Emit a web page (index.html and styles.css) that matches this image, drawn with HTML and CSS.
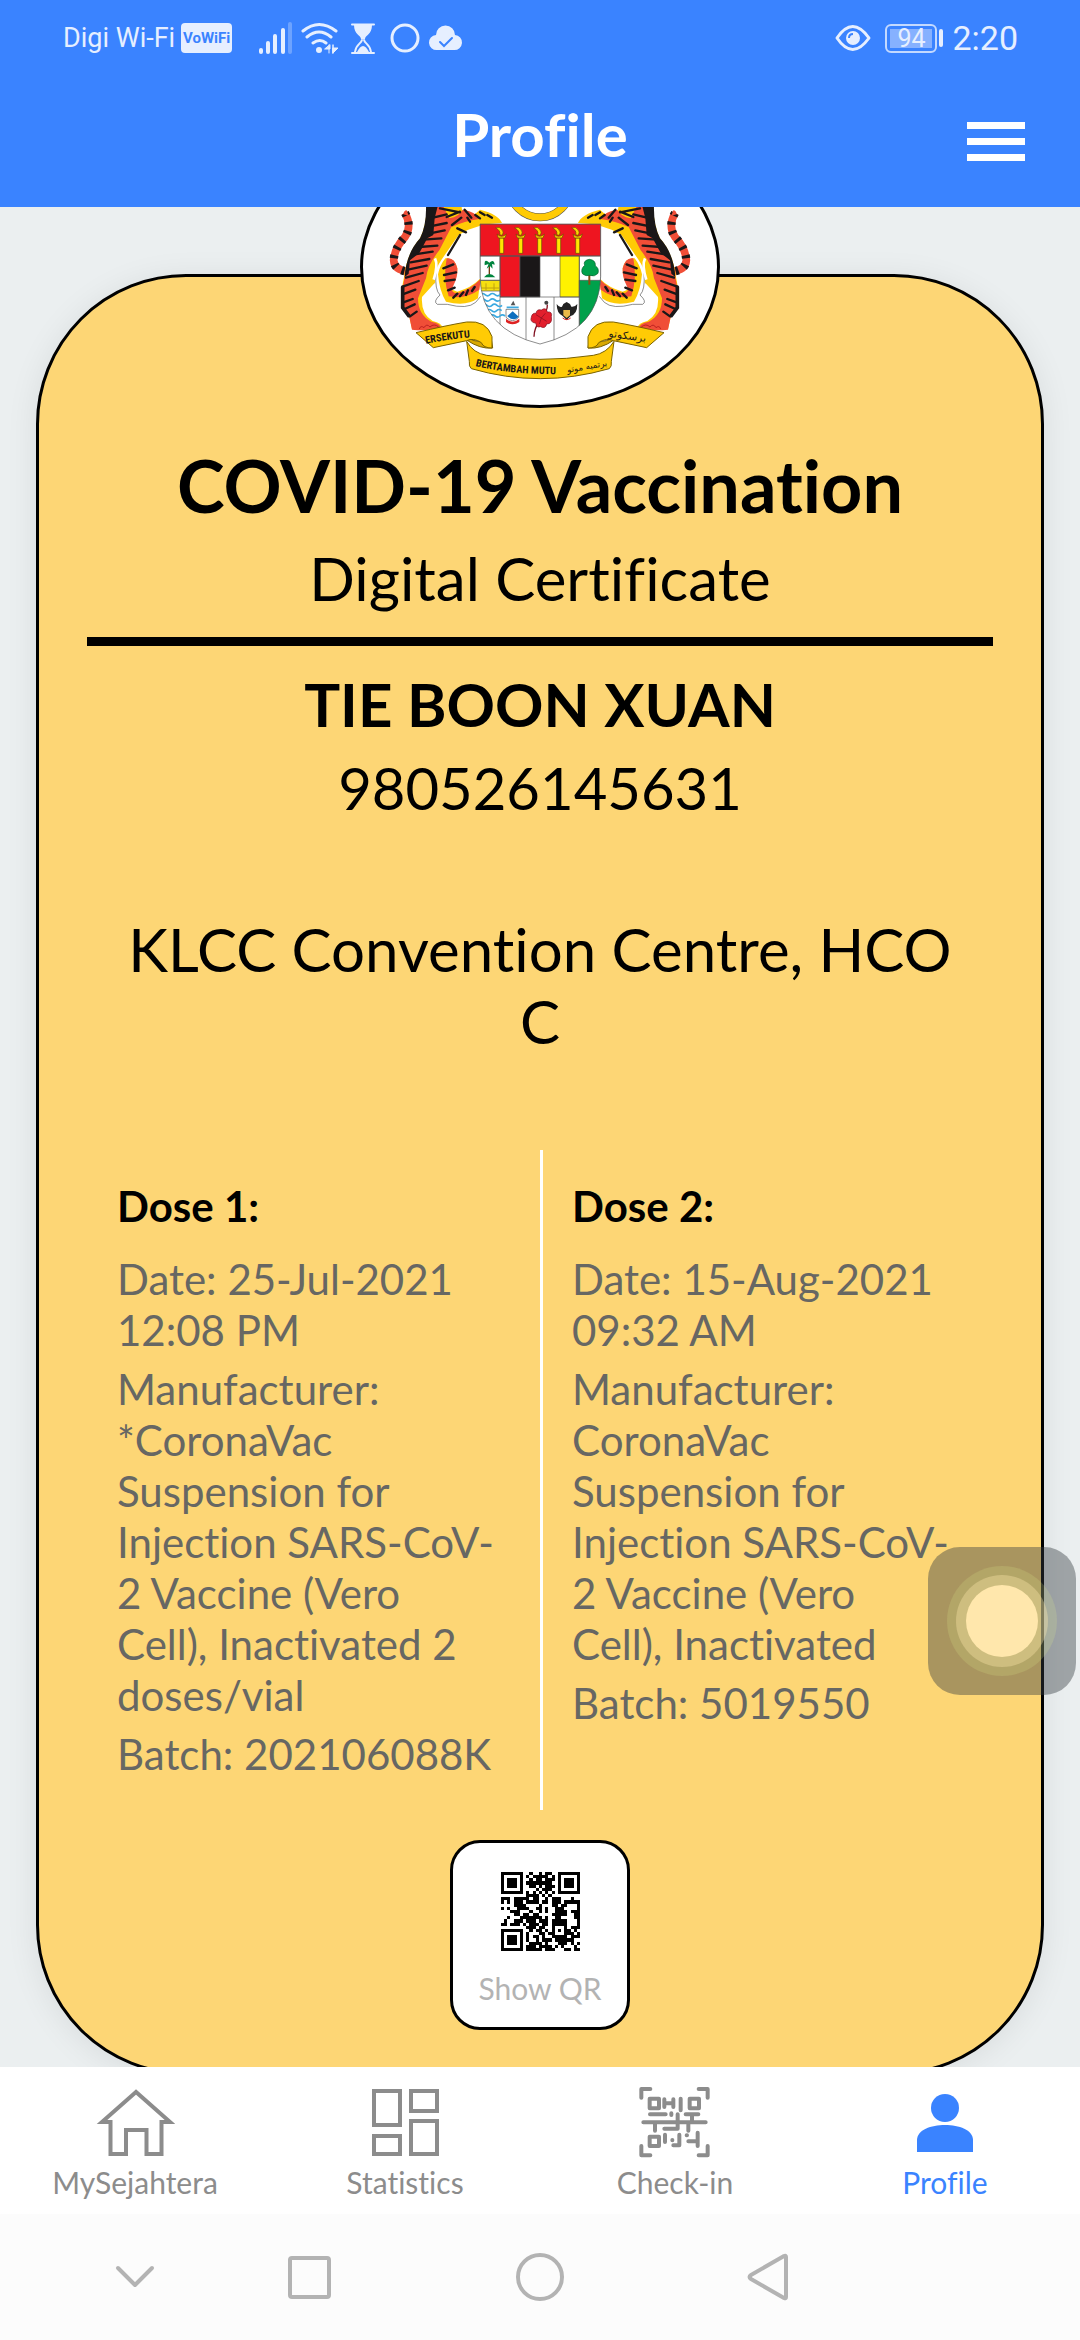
FILE: index.html
```html
<!DOCTYPE html>
<html lang="en">
<head>
<meta charset="utf-8">
<meta name="viewport" content="width=device-width, initial-scale=1">
<title>Profile</title>
<link rel="stylesheet" href="styles.css">
</head>
<body>
<header class="app-header">
  <div class="status-bar">
    <div class="status-left">
      <span class="carrier">Digi Wi-Fi</span>
      <span class="vowifi">VoWiFi</span>
      <svg class="status-icons" width="206" height="36" viewBox="258 20 206 36" fill="none" stroke="#e6efff" stroke-width="3" stroke-linecap="round" aria-hidden="true">
        <g stroke-width="4">
          <path d="M262 50v2M269 43v9M276 36v16M284 30v22"/>
          <path d="M291 24v28" opacity=".3"/>
        </g>
        <path d="M304 31q16-13 33 0M308 37q12-10 24 0M314 43q7-5 13 0" stroke-width="3"/>
        <circle cx="320" cy="50" r="3" fill="#e6efff" stroke="none"/>
        <path d="M326 49h5v-4zM330 45v8M334 53v-8zM334 48h5l-5 5z" fill="#e6efff" stroke-width="1"/>
        <path d="M353 24.500h22M353 53h22" stroke-width="2"/>
        <path d="M355 25h18c0 10-7 10-7 14h-4c0-4-7-4-7-14z" fill="#e6efff" stroke="none"/>
        <path d="M363 40c-1 4-6 4-7 12M365 40c1 4 6 4 7 12" stroke-width="2"/>
        <path d="M358 52q6-12 12 0z" fill="#e6efff" stroke="none"/>
        <circle cx="406" cy="38" r="13"/>
        <path d="M440 50h15a7.500 7.500 0 0 0 1-15a9.500 9.500 0 0 0-19 0a7.500 7.500 0 0 0 1 15z" fill="#e6efff" stroke="none"/>
        <path d="M441 42l4 4 8-8" stroke="#3a83ff" stroke-width="2"/>
      </svg>
    </div>
    <div class="status-right">
      <svg width="36" height="28" viewBox="0 0 36 28" fill="none" stroke="#e6efff" stroke-width="3" aria-hidden="true">
        <path d="M2 14Q17.500-9 34 14Q17.500 37 2 14z" stroke-linejoin="round"/>
        <circle cx="18" cy="14" r="7" fill="#e6efff" stroke="none"/>
        <path d="M14 14q0-4 4-4" stroke="#3a83ff" stroke-width="2"/>
      </svg>
      <span class="battery"><span class="battery-level">94</span></span>
      <span class="battery-tip"></span>
      <time class="clock">2:20</time>
    </div>
  </div>
  <div class="title-bar">
    <h1 class="title">Profile</h1>
    <button class="menu" type="button" aria-label="Menu"><i></i><i></i><i></i></button>
  </div>
</header>

<main class="content">
  <div class="emblem">
    <svg class="emblem-art" viewBox="69 -213 1062 828" aria-label="Coat of arms">
      <defs>
        <g id="tiger">
          <path d="M165 232l-45 36 M168 205q-4 50 12 65q-22 20-8 28h30q60 16 85-6l15-18" fill="none" stroke="#555" stroke-width="2"/>
          <path d="M75 24q22 40 0 72q-32 34-34 70q2 30 44 34" fill="none" stroke="#f04e37" stroke-width="23"/>
          <path d="M75 24q22 40 0 72q-32 34-34 70q2 30 44 34" fill="none" stroke="#1a1718" stroke-width="25" stroke-dasharray="9 19"/>
          <path d="M70 28q2-12 10-12l6 16z" fill="#f04e37"/>
          <path d="M196 160q-16 20-22 48q4 50 24 82q60 16 96-10l8-60q-30 30-70 40l-20-8q22-40 20-62q-8-34-36-30z" fill="#ffcb05"/>
          <path d="M200 160q-12 60 6 114q50 10 92-20l4-32q-34 34-68 42q-26 0-14-22q14-26 12-52q-8-34-32-30z" fill="#f04e37"/>
          <path d="M150 0h-10q0 60-20 100q-40 46-48 116q-10 40-4 84q8 20 20 36l8 36q40 6 92-2q-2-16-30-22q-36-20-32-72l40-44q-8-30 20-70l50-72q50-34 130-36q-10-26-66-40q-20 20-50 28l-6-42z" fill="#ffcb05"/>
          <path d="M142 0q0 70-20 100q-40 46-48 116q-10 40-6 84q8 20 20 36l8 38q40 4 88-2q-2-18-30-22q-40-20-40-70l24-60q4-40 40-84l36-70q40-18 84-24q-10-22-50-28q-10 20-40 26l-20-40z" fill="#f04e37"/>
          <path d="M165 160q10 20-4 64" fill="none" stroke="#fff" stroke-width="8"/>
          <path d="M138 0h36l-10 40-4 50-18 10-24 44-28 22-4 40-12 10q4-70 46-116q20-40 18-100z" fill="#1a1718"/>
          <g stroke="#1a1718" fill="none" stroke-width="7" stroke-linecap="round">
            <path d="M150 40l50-12M150 64l50-10M146 86l48-10M130 104l54-4M118 126l54-4M104 148l54-8M92 172l56-10M84 194l56-12M78 218l50-14M70 244l46-16M68 268l38-14M70 292l28-10M74 312l30-14M90 334l20-14"/>
            <path d="M180 10l60 12M200 36l40-16M216 60l28-22M254 14l20 24M270 50l-8-12M286 30l14 10M240 90l-36 60M190 190l30-12M192 210l36-8M194 228l30-4M204 256l20-8M220 278l12-12M240 274l10-12M258 270l6-14M276 258l8-12M232 70l26 12"/>
            <path d="M68 246v62l18 24" stroke-width="11"/>
            <path d="M300 22l14 8M322 30l14 8"/>
          </g>
          <path d="M118 372q4-12 14-4q8-14 18-2q12-12 26 0" fill="none" stroke="#b22" stroke-width="3"/>
        </g>
        <g id="torch">
          <path d="M-6 34h12v46h-12z" fill="#ffe600" stroke="#6b4b00" stroke-width="2"/>
          <path d="M-14 22q14 14 28 0l-4 12h-20zM-18 4q12-6 18 4q8 8 2 18l-8-2q4-12-12-20z" fill="#ffd400" stroke="#6b4b00" stroke-width="2"/>
        </g>
        <path id="motto-left" d="M258 431Q330 416 430 409"/>
        <path id="motto-mid" d="M406 498Q520 526 690 522"/>
      </defs>
      <circle cx="600" cy="-40" r="92" fill="none" stroke="#555" stroke-width="24"/>
      <circle cx="600" cy="-40" r="92" fill="none" stroke="#ffcb05" stroke-width="21"/>
      <use href="#tiger" transform="translate(120 15)"/>
      <use href="#tiger" transform="translate(1080 15) scale(-1 1)"/>
      <g stroke="#555" stroke-width="2">
        <clipPath id="shield"><path d="M420 72H782V230Q778 390 600 432Q424 390 420 230z"/></clipPath>
        <g clip-path="url(#shield)">
          <path d="M420 72H782V440H420z" fill="#fff"/>
          <path d="M420 72H782V168H420zM480 168H540V291H480z" fill="#ee1520"/>
          <path d="M540 168H600V291H540z" fill="#1a1718"/>
          <path d="M660 168H718V291H660z" fill="#fff200"/>
          <path d="M718 241H782V400H718z" fill="#00a14b"/>
          <path d="M420 241H480V273H420z" fill="#f5df10"/>
          <path d="M420 168H782M480 168V400M718 168V400M480 291H718M558 291V430M642 291V430M420 241H480"/>
          <path d="M420 284q7-7 15 0t15 0t15 0t15 0M420 300q7-7 15 0t15 0t15 0t15 0M426 316q7-7 15 0t15 0t15 0t15 0M440 332q7-7 15 0t15 0t15 0M450 348q7-7 15 0t15 0t15 0" stroke="#3ba9e0" stroke-width="5" fill="none"/>
          <path d="M424 264h54M438 250v20M462 250v20" stroke="#c0a010" stroke-width="3"/>
        </g>
        <path d="M420 72H782V230Q778 390 600 432Q424 390 420 230z" fill="none"/>
      </g>
      <use href="#torch" x="485" y="80"/><use href="#torch" x="542" y="80"/><use href="#torch" x="599" y="80"/><use href="#torch" x="656" y="80"/><use href="#torch" x="713" y="80"/>
      <path d="M448 190v34" stroke="#6b3a10" stroke-width="4"/>
      <path d="M448 188q-16-14-14 8l12-4-6 14 10-8 8 8-2-14 8 2q-2-18-16-6zM432 232q16-20 34 0z" fill="#00853e"/>
      <path d="M748 220v34" stroke="#8a4b10" stroke-width="6"/>
      <path d="M748 178q-20 4-14 18q-14 12-6 26q10 8 20 4q16 6 26-6q4-16-8-22q2-18-18-20z" fill="#00a14b" stroke="#00602c" stroke-width="2"/>
      <path d="M498 328h38v24q-18 20-38 0z" fill="#fff" stroke="#555" stroke-width="2"/>
      <path d="M502 348l16-14 18 16q-16 16-34-2z" fill="#0d6fbf"/><path d="M500 322h36" stroke="#3ba9e0" stroke-width="5"/>
      <path d="M498 356q20 18 40 0v10q-20 14-40 0z" fill="#d22"/><path d="M512 316l8-14 6 14z" fill="#555"/>
      <path d="M582 410q0-24 18-50q24-28 22-46" stroke="#801020" stroke-width="4" fill="none"/>
      <path d="M604 330q14-10 18 6q16-2 12 14q4 22-14 22q-4 16-18 8q-14 4-14-10q-20-4-14-18q2-14 14-12q2-14 16-10z" fill="#e21f2d" stroke="#801020" stroke-width="2"/>
      <path d="M604 354l-16-10M604 354l12-14M604 354l16 10M604 354l-6 18" stroke="#801020" stroke-width="2"/>
      <circle cx="619" cy="308" r="6" fill="#444"/>
      <path d="M650 312q8 12 16 8l4-8 10-6 10 6 4 8q10 2 18-8q0 30-20 36l-12 12-12-12q-18-8-18-36z" fill="#222"/>
      <path d="M670 330h20v16l-10 8-10-8z" fill="#e9b949"/><path d="M668 354q12 10 24 0" stroke="#d22" stroke-width="3" fill="none"/>
      <g fill="#ffcb05" stroke="#7a6200" stroke-width="3" stroke-linejoin="round">
        <path d="M380 420q40 28 78 24l-4-26q-30 16-72-4z" fill="#d9a900"/>
        <path d="M822 420q-40 28-78 24l4-26q30 16 72-4z" fill="#d9a900"/>
        <path d="M228 398Q320 376 380 366Q440 360 456 410V444Q430 444 424 428Q400 412 380 422L280 443z"/>
        <path d="M972 398Q880 376 820 366Q760 360 744 410V444Q770 444 776 428Q800 412 820 422L920 443z"/>
        <path d="M380 424Q400 460 440 466Q600 490 760 466Q800 460 822 424L814 484Q816 500 808 506Q600 566 394 506Q386 500 388 484z"/>
      </g>
      <g class="motto" fill="#1a1718">
        <text><textPath href="#motto-left">ERSEKUTU</textPath></text>
        <text><textPath href="#motto-mid">BERTAMBAH MUTU</textPath></text>
        <text class="jawi" direction="rtl" x="862" y="418" text-anchor="middle" transform="rotate(8 862 410)">برسکوتو</text>
        <text class="jawi jawi-small" direction="rtl" x="742" y="508" text-anchor="middle" transform="rotate(-10 742 505)">برتمبه موتو</text>
      </g>
    </svg>
  </div>

  <section class="certificate">
    <h2 class="cert-title">COVID-19 Vaccination</h2>
    <p class="cert-subtitle">Digital Certificate</p>
    <hr class="rule">
    <h3 class="holder">TIE BOON XUAN</h3>
    <p class="holder-id">980526145631</p>
    <p class="venue">KLCC Convention Centre, HCO<br>C</p>
    <div class="doses">
      <article class="dose">
        <h4 class="dose-title">Dose 1:</h4>
        <p>Date: 25-Jul-2021<br>12:08 PM</p>
        <p>Manufacturer:<br>*CoronaVac<br>Suspension for<br>Injection SARS-CoV-<br>2 Vaccine (Vero<br>Cell), Inactivated 2<br>doses/vial</p>
        <p>Batch: 202106088K</p>
      </article>
      <article class="dose">
        <h4 class="dose-title">Dose 2:</h4>
        <p>Date: 15-Aug-2021<br>09:32 AM</p>
        <p>Manufacturer:<br>CoronaVac<br>Suspension for<br>Injection SARS-CoV-<br>2 Vaccine (Vero<br>Cell), Inactivated</p>
        <p>Batch: 5019550</p>
      </article>
    </div>
    <button class="qr-button" type="button">
      <svg class="qr" width="79" height="79" viewBox="0 0 25 25" aria-hidden="true"></svg>
      <span>Show QR</span>
    </button>
  </section>
</main>

<button class="assist" type="button" aria-label="Assistive touch"><span></span></button>

<nav class="tabs">
  <a class="tab" href="#home">
    <svg width="80" height="80" viewBox="0 0 80 80" fill="none" stroke="#8c8c8c" stroke-width="4" aria-hidden="true"><path d="M41 10L7 40H15.500V72H31V48H51.500V72H66.500V40H75z"/></svg>
    <span>MySejahtera</span>
  </a>
  <a class="tab" href="#statistics">
    <svg width="80" height="80" viewBox="0 0 80 80" fill="none" stroke="#8c8c8c" stroke-width="4" aria-hidden="true"><path d="M9 9h26v34H9zM46 9h26v20H46zM9 54h26v18H9zM46 39h26v33H46z"/></svg>
    <span>Statistics</span>
  </a>
  <a class="tab" href="#checkin">
    <svg width="80" height="80" viewBox="0 0 240 240" fill="none" stroke="#8c8c8c" stroke-width="12" stroke-linecap="round" stroke-linejoin="round" aria-hidden="true"><path d="M19 47V21H46M191 21H218V47M19 192V220H46M191 220H218V192M44 50H72V79H44zM164 50H192V79H164zM44 164H72V192H44zM88 52V75M88 64H115M115 52V75M137 50V85M45 97H92M109 94V99M128 97V140H88M25 121H212M152 97H190M171 97V121M60 121V146M160 121V146M90 158V180M112 174V175M133 158V190H115M155 160H156M160 178H188M188 152V192"/></svg>
    <span>Check-in</span>
  </a>
  <a class="tab tab-active" href="#profile" aria-current="page">
    <svg width="80" height="80" viewBox="0 0 80 80" fill="#3a83ff" aria-hidden="true"><circle cx="40" cy="26" r="14"/><path d="M12 70V58C12 38 68 38 68 58V70z"/></svg>
    <span>Profile</span>
  </a>
</nav>

<nav class="system-nav" aria-label="System">
  <button type="button" aria-label="Hide"><svg width="48" height="48" viewBox="0 0 48 48"><path d="M7 15L24 32L41 15"/></svg></button>
  <button type="button" aria-label="Recent apps"><svg width="48" height="48" viewBox="0 0 48 48"><rect x="5" y="5" width="39" height="39" rx="2"/></svg></button>
  <button type="button" aria-label="Home"><svg width="48" height="48" viewBox="0 0 48 48"><circle cx="24" cy="24" r="22"/></svg></button>
  <button type="button" aria-label="Back"><svg width="48" height="48" viewBox="0 0 48 48"><path d="M42 4V44Q42 46 40 45L7 26Q4 24 7 22L40 3Q42 2 42 4z"/></svg></button>
</nav>
<script src="qr.js"></script>
</body>
</html>
```
FILE: styles.css
```css
* { box-sizing: border-box; margin: 0; padding: 0; }

body {
  display: flex;
  flex-direction: column;
  height: 100vh;
  overflow: hidden;
  background: #ebeff0;
  color: #000;
  font-family: Lato, "Open Sans", sans-serif;
  font-variant-ligatures: none;
}

button { border: 0; background: none; font: inherit; cursor: pointer; }
a { text-decoration: none; }
svg { display: block; flex: none; }

.app-header { flex: none; background: #3a83ff; color: #fff; }

.status-bar {
  display: flex;
  justify-content: space-between;
  align-items: center;
  height: 76px;
  padding: 0 62px 0 63px;
  color: #e6efff;
  font-family: Roboto, sans-serif;
}
.status-left, .status-right { display: flex; align-items: center; }
.carrier { font-size: 27px; line-height: 32px; }
.vowifi {
  width: 51px;
  height: 30px;
  margin: 0 25px 0 6px;
  border-radius: 4px;
  background: #e6efff;
  color: #3a83ff;
  font: 700 15px/30px Roboto, sans-serif;
  text-align: center;
}
.battery {
  width: 52px;
  height: 29px;
  margin-left: 14px;
  padding: 3px;
  border: 2px solid #c3d9ff;
  border-radius: 6px;
}
.battery-level {
  display: block;
  background: #86b1ff;
  font-size: 25px;
  line-height: 19px;
  text-align: center;
}
.battery-tip { width: 4px; height: 18px; margin: 0 9px 0 2px; border-radius: 2px; background: #e6efff; }
.clock { font-size: 34px; line-height: 40px; }

.title-bar {
  display: grid;
  grid-template-columns: 1fr auto 1fr;
  align-items: center;
  height: 131px;
  padding: 0 55px;
}
.title { grid-column: 2; padding-bottom: 16px; font-size: 60px; font-weight: 700; line-height: 72px; }
.menu { display: grid; gap: 9px; justify-self: end; width: 58px; }
.menu i { height: 7px; background: #fff; }

.content { flex: 1; min-height: 0; overflow: hidden; padding: 0 36px; }

.emblem {
  position: relative;
  z-index: 1;
  width: 360px;
  height: 282px;
  margin: -81px auto -134px;
  overflow: hidden;
  border: 3px solid #000;
  border-radius: 50%;
  background: #fff;
}
.emblem-art { width: 100%; height: 100%; }
.motto { font: 700 31px "Liberation Sans Narrow", "Roboto Condensed", Roboto, sans-serif; }
.motto .jawi { font: 32px "DejaVu Sans", sans-serif; }
.motto .jawi-small { font-size: 26px; }

.certificate {
  padding: 164px 48px 42px;
  border: 3px solid #000;
  border-radius: 150px;
  background: #fdd675;
  box-shadow: 0 4px 32px rgba(0, 0, 0, .08);
  text-align: center;
}
.cert-title { font-size: 72px; font-weight: 700; line-height: 88px; }
.cert-subtitle { margin-top: 13px; font-size: 60px; line-height: 72px; }
.rule { height: 9px; margin: 23px 0 22px; border: 0; background: #000; }
.holder { font-size: 60px; font-weight: 700; line-height: 72px; }
.holder-id { margin-top: 12px; font-size: 58px; line-height: 72px; }
.venue { margin-top: 89px; font-size: 60px; line-height: 72px; }

.doses {
  display: grid;
  grid-template-columns: 1fr 1fr;
  margin-top: 93px;
  color: #676763;
  font-size: 42px;
  line-height: 51px;
  text-align: left;
  white-space: nowrap;
}
.dose { display: grid; gap: 8px; align-content: start; padding: 31px 0 30px 30px; }
.dose + .dose { padding-left: 29px; border-left: 3px solid #fff; }
.dose-title { margin-bottom: 14px; color: #000; font-size: 42px; font-weight: 700; line-height: 51px; }

.qr-button {
  display: flex;
  flex-direction: column;
  align-items: center;
  gap: 19px;
  width: 180px;
  height: 190px;
  margin: 30px auto 0;
  padding-top: 29px;
  border: 3px solid #000;
  border-radius: 30px;
  background: #fff;
  color: #b3b3b3;
  font-size: 30px;
  line-height: 36px;
}

.assist {
  position: fixed;
  right: 4px;
  top: 1547px;
  display: grid;
  place-items: center;
  width: 148px;
  height: 148px;
  border-radius: 32px;
  background: rgba(52, 59, 65, .42);
}
.assist span {
  width: 72px;
  height: 72px;
  border-radius: 50%;
  background: #ffe7ac;
  box-shadow: 0 0 0 10px rgba(255, 231, 172, .35), 0 0 0 19px rgba(220, 231, 140, .2);
}

.tabs { display: grid; grid-template-columns: repeat(4, 1fr); flex: none; background: #fff; }
.tab {
  display: flex;
  flex-direction: column;
  align-items: center;
  padding: 15px 0 11px;
  color: #8c8c8c;
  font-size: 30px;
  line-height: 41px;
}
.tab-active { color: #3a83ff; }

.system-nav {
  display: grid;
  grid-template-columns: 270fr 78fr 384fr 72fr 276fr;
  place-items: center;
  flex: none;
  height: 126px;
  background: #fcfcfc;
}
.system-nav svg { fill: none; stroke: #b3b3b3; stroke-width: 4; stroke-linecap: round; stroke-linejoin: round; }
```
FILE: qr.js
```js
// Dark modules of the code, one string per row.
const rows = [
  "1111111001001011001111111",
  "1000001010111110101000001",
  "1011101001011011101011101",
  "1011101011111111001011101",
  "1011101001101011101011101",
  "1000001000010111001000001",
  "1111111010101010101111111",
  "0000000011110101000000000",
  "1110111110110010111000100",
  "1010111011110110111011111",
  "0000111100001000110110001",
  "1010011110011010011100001",
  "0001110001001010011110111",
  "0000110110110000111110011",
  "0010001111111010011000011",
  "0100111011101110111110001",
  "1101110101110110111110001",
  "0000000011101100100010111",
  "1111111001011010101011010",
  "1000001010001101100011101",
  "1011101010110100111110111",
  "1011101010010111011111100",
  "1011101001111010001110101",
  "1000001011101111010100010",
  "1111111011111011100011011"
];
const path = document.createElementNS("http://www.w3.org/2000/svg", "path");
path.setAttribute("d", rows.map((row, y) =>
  [...row].map((cell, x) => cell === "1" ? `M${x} ${y}h1v1h-1z` : "").join("")).join(""));
path.setAttribute("shape-rendering", "crispEdges");
document.querySelector(".qr").append(path);
```
